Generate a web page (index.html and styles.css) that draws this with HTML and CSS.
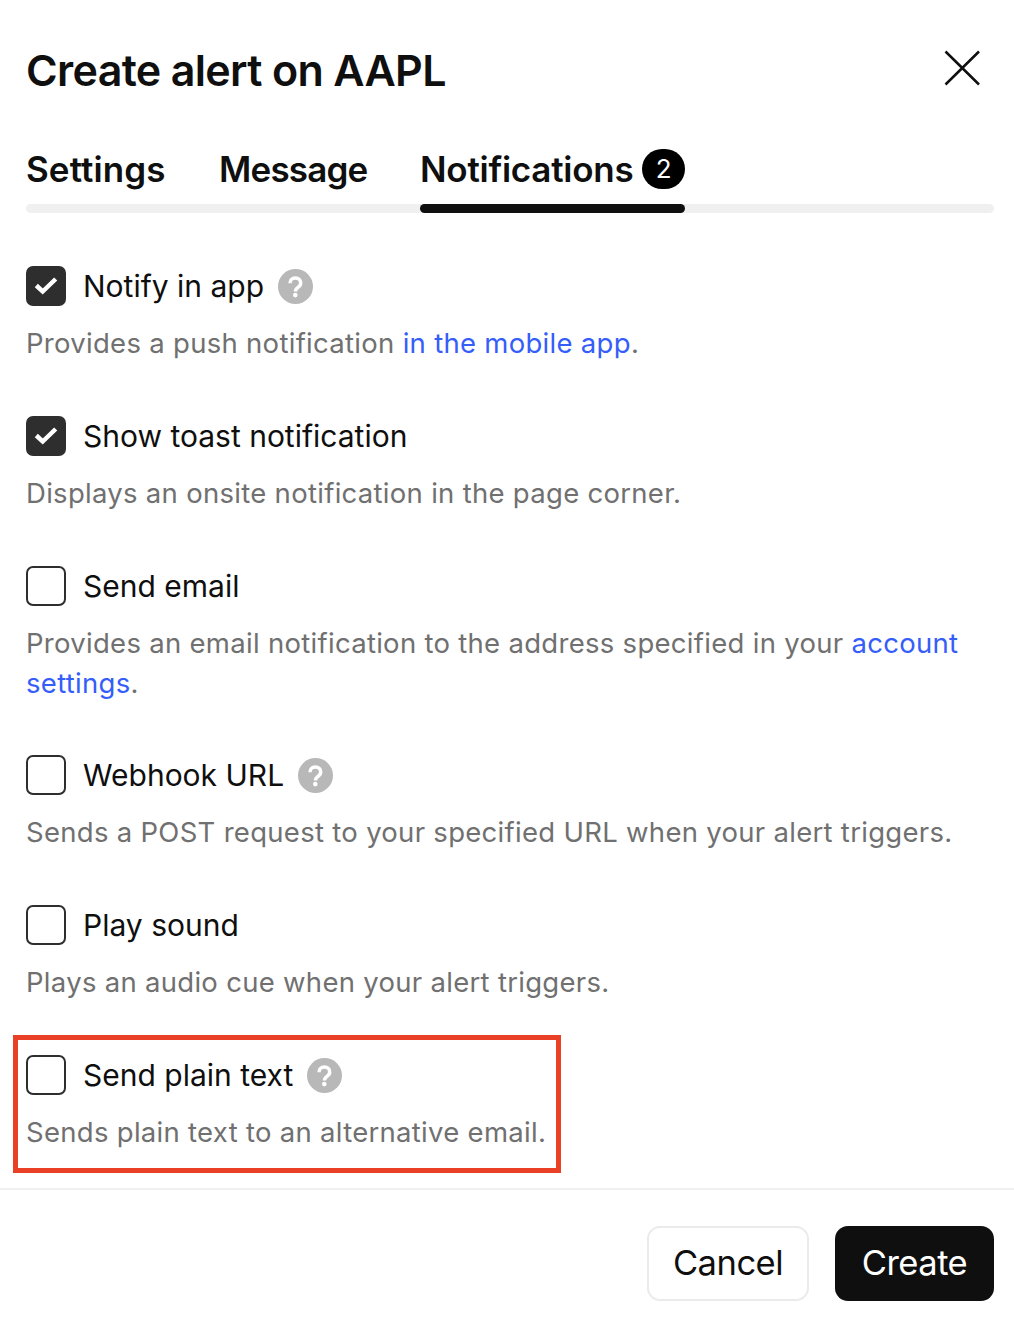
FILE: index.html
```html
<!DOCTYPE html>
<html lang="en">
<head>
<meta charset="utf-8">
<title>Create alert on AAPL</title>
<link rel="stylesheet" href="styles.css">
</head>
<body>
<svg width="0" height="0" class="defs">
  <symbol id="check" viewBox="0 0 40 40"><path d="M10.3 19.500l6.400 6L29.700 13" fill="none" stroke="#fff" stroke-width="4.500"/></symbol>
  <symbol id="help" viewBox="0 0 35 35"><circle cx="17.500" cy="17.500" r="17.500" fill="#b8b8b8"/><path d="M12 14.200c0-3 2.100-5.200 5.300-5.200 3.100 0 5.400 2 5.400 4.900 0 2.200-1.200 3.400-2.700 4.500-1.700 1.200-2.500 2-2.500 4.200" fill="none" stroke="#fff" stroke-width="3.500"/><circle cx="17.300" cy="26.100" r="2.300" fill="#fff"/></symbol>
</svg>
<main class="dialog">
  <header class="header">
    <h1 class="title">Create alert on AAPL</h1>
    <button class="close" aria-label="Close"><svg width="36" height="36" viewBox="0 0 36 36"><path d="M1.500 1.500l33.500 33m0-33l-33.500 33" fill="none" stroke="#0f0f0f" stroke-width="2.500"/></svg></button>
  </header>
  <nav class="tabs">
    <a class="tab settings">Settings</a>
    <a class="tab message">Message</a>
    <a class="tab active">Notifications<span class="count">2</span></a>
  </nav>
  <section class="options">
    <div class="option">
      <label class="row"><span class="box checked"><svg width="40" height="40"><use href="#check"/></svg></span><span class="label">Notify in app</span><svg class="help"><use href="#help"/></svg></label>
      <p class="desc">Provides a push notification <a class="link">in the mobile app</a>.</p>
    </div>
    <div class="option">
      <label class="row"><span class="box checked"><svg width="40" height="40"><use href="#check"/></svg></span><span class="label">Show toast notification</span></label>
      <p class="desc">Displays an onsite notification in the page corner.</p>
    </div>
    <div class="option tall">
      <label class="row"><span class="box"></span><span class="label">Send email</span></label>
      <p class="desc">Provides an email notification to the address specified in your <a class="link">account<br>settings</a>.</p>
    </div>
    <div class="option">
      <label class="row"><span class="box"></span><span class="label">Webhook URL</span><svg class="help"><use href="#help"/></svg></label>
      <p class="desc">Sends a POST request to your specified URL when your alert triggers.</p>
    </div>
    <div class="option">
      <label class="row"><span class="box"></span><span class="label">Play sound</span></label>
      <p class="desc">Plays an audio cue when your alert triggers.</p>
    </div>
    <div class="option marked">
      <label class="row"><span class="box"></span><span class="label">Send plain text</span><svg class="help"><use href="#help"/></svg></label>
      <p class="desc">Sends plain text to an alternative email.</p>
    </div>
  </section>
  <footer class="footer">
    <button class="button cancel">Cancel</button>
    <button class="button create">Create</button>
  </footer>
</main>
</body>
</html>
```
FILE: styles.css
```css
* { box-sizing: border-box; }
body { margin: 0; background: #fff; color: #0f0f0f; font-family: Inter, "Liberation Sans", sans-serif; }
button { font: inherit; padding: 0; border: 0; background: none; }
.defs { display: none; }
.dialog { height: 1322px; display: flex; flex-direction: column; overflow: hidden; }
.header { height: 142px; padding: 0 34px 2px 26px; display: flex; justify-content: space-between; align-items: center; }
.title { margin: 0; font-size: 43px; line-height: 52px; font-weight: 600; letter-spacing: -0.67px; white-space: nowrap; }
.close { width: 36px; height: 36px; margin-top: -4px; }
.close svg { display: block; }
.tabs { height: 71px; margin: 0 20px 0 26px; display: flex; position: relative; }
.tabs::before, .active::after { content: ""; position: absolute; left: 0; right: 0; bottom: 0; height: 9px; border-radius: 4.5px; background: #f0f0f0; }
.tab { display: flex; height: 71px; padding-bottom: 18px; align-items: center; font-size: 35px; font-weight: 600; white-space: nowrap; position: relative; }
.settings { width: 193px; letter-spacing: 0.1px; }
.message { width: 201px; letter-spacing: -0.8px; }
.active { width: 265px; justify-content: space-between; letter-spacing: -0.25px; }
.active::after { background: #0f0f0f; }
.count { width: 43px; height: 40px; margin-top: 1px; border-radius: 20px; background: #000; color: #fff; font-size: 26px; line-height: 39px; font-weight: 400; text-align: center; }
.options { flex: 1; padding: 53px 13px 0; }
.option { height: 150px; padding: 0 13px; }
.tall { height: 189px; }
.row { height: 40px; display: flex; align-items: center; }
.box { width: 40px; height: 40px; flex: none; border: 2px solid #2e2e2e; border-radius: 7px; }
.checked { border: 0; background: #2e2e2e; }
.checked svg { display: block; }
.label { margin-left: 17px; font-size: 30px; line-height: 40px; white-space: nowrap; }
.help { width: 35px; height: 35px; margin-left: 13.5px; }
.desc { margin: 17px 0 0; color: #707070; font-size: 27.5px; line-height: 40px; letter-spacing: 0.29px; white-space: nowrap; }
.link { color: #355df9; }
.marked { width: 548px; height: 138px; margin-top: -20px; padding: 15px 8px; border: 5px solid #ea4025; }
.footer { height: 134px; border-top: 2px solid #f0f0f0; padding: 36px 20px 0 0; display: flex; justify-content: flex-end; gap: 26px; }
.button { height: 75px; padding-bottom: 3px; border-radius: 13px; font-size: 34.5px; letter-spacing: -0.5px; }
.cancel { width: 162px; border: 2px solid #ebebeb; color: #0f0f0f; }
.create { width: 159px; background: #0f0f0f; color: #fff; }
```
